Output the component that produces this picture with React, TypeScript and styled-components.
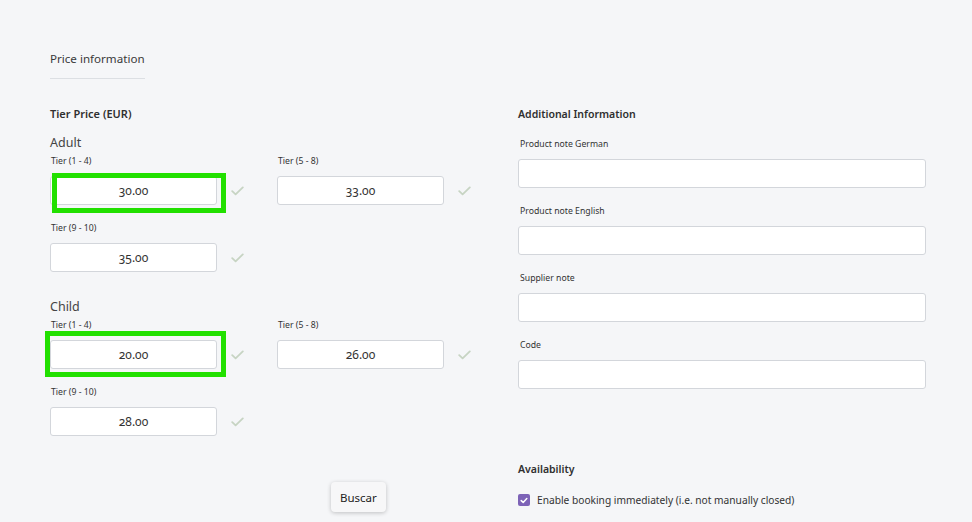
import React from "react";
import styled, { createGlobalStyle } from "styled-components";

const GlobalStyle = createGlobalStyle`
  html, body {
    margin: 0;
    padding: 0;
    background: #f5f6f8;
  }
  body {
    font-family: "Noto Sans", "Open Sans", Arial, sans-serif;
    color: #333;
  }
  * { box-sizing: border-box; }
`;

const Page = styled.div`
  padding: 50px 0 0 50px;
  width: 972px;
  height: 522px;
  overflow: hidden;
`;

const SectionHeader = styled.div`
  width: 95px;
  padding-bottom: 10px;
  border-bottom: 1px solid #dcdfe3;
  font-size: 11.6px;
  line-height: 18px;
  color: #3a3a3a;
  white-space: nowrap;
`;

const Columns = styled.div`
  display: grid;
  grid-template-columns: 468px 408px;
  margin-top: 26px;
`;

const Column = styled.div`
  display: flex;
  flex-direction: column;
`;

const Heading = styled.div<{ $gap?: number; $size?: number }>`
  font-size: ${(p) => p.$size ?? 11}px;
  line-height: 18px;
  font-weight: 600;
  color: #2f2f2f;
  white-space: nowrap;
  margin-bottom: ${(p) => p.$gap ?? 0}px;
`;

const GroupTitle = styled.div`
  font-size: 12.5px;
  line-height: 18px;
  color: #444;
  margin-bottom: 2px;
`;

const Group = styled.div<{ $top: number }>`
  margin-top: ${(p) => p.$top}px;
`;

const TierGrid = styled.div`
  display: grid;
  grid-template-columns: 227px 227px;
  row-gap: 16px;
`;

const Field = styled.div`
  display: flex;
  flex-direction: column;
`;

const FieldLabel = styled.label`
  font-size: 8.7px;
  line-height: 14px;
  margin: 0 0 8px 1px;
  color: #333;
  white-space: nowrap;
`;

const InputRow = styled.div`
  display: flex;
  align-items: center;
`;

const InputWrap = styled.div`
  position: relative;
  display: flex;
`;

const TextInput = styled.input<{ $width: number }>`
  width: ${(p) => p.$width}px;
  height: 29px;
  border: 1px solid #d3d6db;
  border-radius: 3px;
  background: #fff;
  padding: 0 8px;
  font-family: "Noto Sans", "Open Sans", Arial, sans-serif;
  font-size: 12px;
  font-variant-numeric: oldstyle-nums;
  color: #333;
  text-align: center;
  outline: none;
`;

/* Highlight frame drawn over a field */
const Highlight = styled.div<{ $l: number; $t: number; $w: number; $h: number }>`
  position: absolute;
  left: ${(p) => p.$l}px;
  top: ${(p) => p.$t}px;
  width: ${(p) => p.$w}px;
  height: ${(p) => p.$h}px;
  border: 5px solid #22e000;
  pointer-events: none;
`;

const Check = styled.svg`
  margin-left: 14px;
  flex: none;
`;

const NoteField = styled(Field)`
  margin-bottom: 16px;
`;

const NoteLabel = styled(FieldLabel)`
  margin-left: 2px;
`;

const Availability = styled.div`
  margin-top: 55px;
`;

const CheckRow = styled.label`
  display: flex;
  align-items: center;
  gap: 7px;
  margin-top: 14px;
  font-size: 10.2px;
  line-height: 16px;
  color: #333;
  white-space: nowrap;
`;

const Box = styled.span`
  width: 12px;
  height: 12px;
  border-radius: 2px;
  background: #7d63b7;
  display: flex;
  align-items: center;
  justify-content: center;
`;

const Footer = styled.div`
  display: flex;
  padding-left: 281px;
  margin-top: 46px;
`;

const Button = styled.button`
  height: 30px;
  padding: 0 9px;
  border: none;
  border-radius: 4px;
  background: #f7f7f8;
  box-shadow: 0 1px 4px rgba(0, 0, 0, 0.22);
  font-family: "Noto Sans", "Open Sans", Arial, sans-serif;
  font-size: 11.5px;
  color: #222;
`;

type Frame = { l: number; t: number; w: number; h: number };
type Tier = { label: string; value: string; frame?: Frame };

const CheckIcon = () => (
  <Check width="13" height="10" viewBox="0 0 13 10">
    <path d="M1.2 5.2 L4.6 8.4 L11.8 1.4" fill="none" stroke="#c7d4c3" strokeWidth="1.8" strokeLinecap="round" strokeLinejoin="round" />
  </Check>
);

const TierField = ({ label, value, frame }: Tier) => (
  <Field>
    <FieldLabel>{label}</FieldLabel>
    <InputRow>
      <InputWrap>
        <TextInput $width={167} defaultValue={value} />
        {frame && <Highlight $l={frame.l} $t={frame.t} $w={frame.w} $h={frame.h} />}
      </InputWrap>
      <CheckIcon />
    </InputRow>
  </Field>
);

const groups: { title: string; top: number; tiers: Tier[] }[] = [
  {
    title: "Adult",
    top: 11,
    tiers: [
      { label: "Tier (1 - 4)", value: "30.00", frame: { l: 2, t: -3, w: 174, h: 40 } },
      { label: "Tier (5 - 8)", value: "33.00" },
      { label: "Tier (9 - 10)", value: "35.00" },
    ],
  },
  {
    title: "Child",
    top: 26,
    tiers: [
      { label: "Tier (1 - 4)", value: "20.00", frame: { l: -5, t: -9, w: 181, h: 46 } },
      { label: "Tier (5 - 8)", value: "26.00" },
      { label: "Tier (9 - 10)", value: "28.00" },
    ],
  },
];

const notes = ["Product note German", "Product note English", "Supplier note", "Code"];

export default function App() {
  return (
    <>
      <GlobalStyle />
      <Page>
        <SectionHeader>Price information</SectionHeader>
        <Columns>
          <Column>
            <Heading>Tier Price (EUR)</Heading>
            {groups.map((g) => (
              <Group key={g.title} $top={g.top}>
                <GroupTitle>{g.title}</GroupTitle>
                <TierGrid>
                  {g.tiers.map((t) => (
                    <TierField key={t.label} {...t} />
                  ))}
                </TierGrid>
              </Group>
            ))}
            <Footer>
              <Button>Buscar</Button>
            </Footer>
          </Column>
          <Column>
            <Heading $gap={14} $size={10.5}>Additional Information</Heading>
            {notes.map((n) => (
              <NoteField key={n}>
                <NoteLabel>{n}</NoteLabel>
                <TextInput $width={408} />
              </NoteField>
            ))}
            <Availability>
              <Heading $size={10.5}>Availability</Heading>
              <CheckRow>
                <Box>
                  <svg width="8" height="7" viewBox="0 0 8 7">
                    <path d="M1.2 3.6 L3.2 5.4 L6.8 1.6" fill="none" stroke="#fff" strokeWidth="1.5" strokeLinecap="round" strokeLinejoin="round" />
                  </svg>
                </Box>
                Enable booking immediately (i.e. not manually closed)
              </CheckRow>
            </Availability>
          </Column>
        </Columns>
      </Page>
    </>
  );
}
